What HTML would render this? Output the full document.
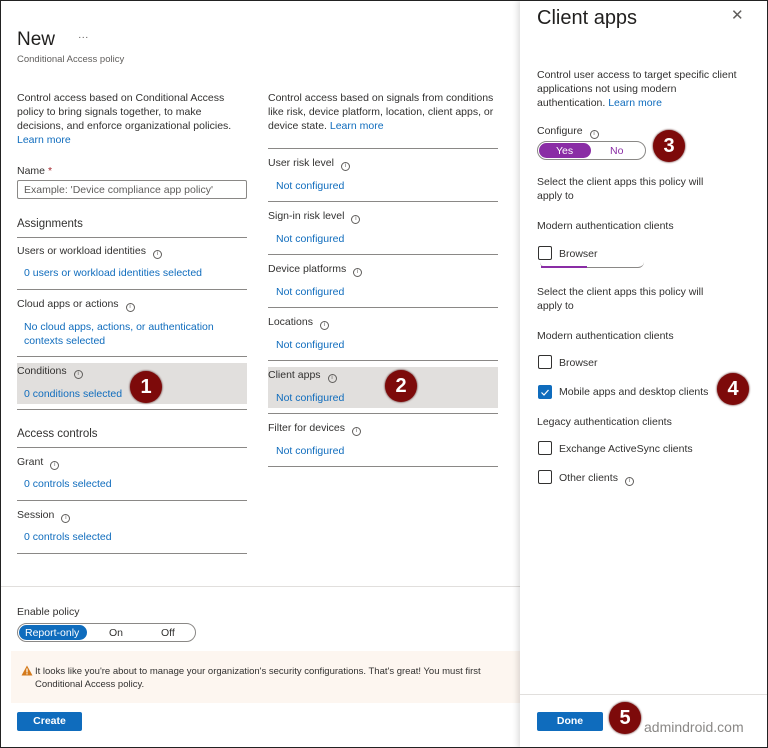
<!DOCTYPE html>
<html><head><meta charset="utf-8"><style>
*{margin:0;padding:0;box-sizing:border-box}
body{width:768px;height:748px;overflow:hidden;background:#fff;font-family:"Liberation Sans",sans-serif;font-size:10.5px;color:#323130;position:relative}
.t{position:absolute;line-height:14px;white-space:nowrap}
.l{color:#0f6cbd}
.hr{position:absolute;height:1px;background:#8a8886}
.i{display:inline-block;width:9px;height:9px;border:1px solid #605e5c;border-radius:50%;font-size:6px;line-height:7px;text-align:center;margin-left:7px;vertical-align:-1px;color:#605e5c}
.b{position:absolute;width:32px;height:32px;border-radius:50%;background:#7d0a0a;color:#fff;font-weight:bold;font-size:20px;line-height:32px;text-align:center;box-shadow:0 0 2px #400}
.cb{position:absolute;width:14px;height:14px;border:1px solid #323130;border-radius:2px;background:#fff}
.gray{position:absolute;background:#e1dfdd}
</style></head><body>
<div style="position:absolute;inset:0;border:1px solid #222;z-index:9;pointer-events:none"></div>

<div class="t" style="left:17px;top:29px;font-size:19px;line-height:22px;color:#201f1e">New</div>
<div class="t" style="left:78px;top:30px;color:#605e5c">···</div>
<div class="t" style="left:17px;top:53px;font-size:9.5px;color:#605e5c">Conditional Access policy</div>

<div class="t" style="left:17px;top:91px">Control access based on Conditional Access<br>policy to bring signals together, to make<br>decisions, and enforce organizational policies.<br><span class="l">Learn more</span></div>
<div class="t" style="left:17px;top:164px">Name <span style="color:#a4262c">*</span></div>
<div style="position:absolute;left:17px;top:180px;width:230px;height:19px;border:1px solid #8a8886;border-radius:2px"></div>
<div class="t" style="left:24px;top:183px;color:#605e5c">Example: 'Device compliance app policy'</div>
<div class="t" style="left:17px;top:217px;font-size:11.5px">Assignments</div>
<div class="hr" style="left:17px;top:237px;width:230px"></div>
<div class="t" style="left:17px;top:244px">Users or workload identities<span class="i">i</span></div>
<div class="t l" style="left:24px;top:266px">0 users or workload identities selected</div>
<div class="hr" style="left:17px;top:289px;width:230px"></div>
<div class="t" style="left:17px;top:297px">Cloud apps or actions<span class="i">i</span></div>
<div class="t l" style="left:24px;top:320px">No cloud apps, actions, or authentication<br>contexts selected</div>
<div class="hr" style="left:17px;top:356px;width:230px"></div>
<div class="gray" style="left:17px;top:363px;width:230px;height:41px"></div>
<div class="t" style="left:17px;top:364px">Conditions<span class="i">i</span></div>
<div class="t l" style="left:24px;top:387px">0 conditions selected</div>
<div class="b" style="left:130px;top:371px">1</div>
<div class="hr" style="left:17px;top:409px;width:230px"></div>
<div class="t" style="left:17px;top:427px;font-size:11.5px">Access controls</div>
<div class="hr" style="left:17px;top:447px;width:230px"></div>
<div class="t" style="left:17px;top:455px">Grant<span class="i">i</span></div>
<div class="t l" style="left:24px;top:477px">0 controls selected</div>
<div class="hr" style="left:17px;top:500px;width:230px"></div>
<div class="t" style="left:17px;top:508px">Session<span class="i">i</span></div>
<div class="t l" style="left:24px;top:530px">0 controls selected</div>
<div class="hr" style="left:17px;top:553px;width:230px"></div>

<div class="t" style="left:268px;top:91px">Control access based on signals from conditions<br>like risk, device platform, location, client apps, or<br>device state. <span class="l">Learn more</span></div>
<div class="hr" style="left:268px;top:148px;width:230px"></div>
<div class="t" style="left:268px;top:156px">User risk level<span class="i">i</span></div>
<div class="t l" style="left:276px;top:179px">Not configured</div>
<div class="hr" style="left:268px;top:201px;width:230px"></div>
<div class="t" style="left:268px;top:209px">Sign-in risk level<span class="i">i</span></div>
<div class="t l" style="left:276px;top:232px">Not configured</div>
<div class="hr" style="left:268px;top:254px;width:230px"></div>
<div class="t" style="left:268px;top:262px">Device platforms<span class="i">i</span></div>
<div class="t l" style="left:276px;top:285px">Not configured</div>
<div class="hr" style="left:268px;top:307px;width:230px"></div>
<div class="t" style="left:268px;top:315px">Locations<span class="i">i</span></div>
<div class="t l" style="left:276px;top:338px">Not configured</div>
<div class="hr" style="left:268px;top:360px;width:230px"></div>
<div class="gray" style="left:268px;top:367px;width:230px;height:41px"></div>
<div class="t" style="left:268px;top:368px">Client apps<span class="i">i</span></div>
<div class="t l" style="left:276px;top:391px">Not configured</div>
<div class="b" style="left:385px;top:370px">2</div>
<div class="hr" style="left:268px;top:413px;width:230px"></div>
<div class="t" style="left:268px;top:421px">Filter for devices<span class="i">i</span></div>
<div class="t l" style="left:276px;top:444px">Not configured</div>
<div class="hr" style="left:268px;top:466px;width:230px"></div>

<div style="position:absolute;left:0;top:586px;width:520px;height:1px;background:#e1dfdd"></div>
<div class="t" style="left:17px;top:605px">Enable policy</div>
<div style="position:absolute;left:17px;top:623px;width:179px;height:19px;border:1px solid #8a8886;border-radius:10px"></div>
<div style="position:absolute;left:19px;top:625px;width:68px;height:15px;background:#0f6cbd;border-radius:8px"></div>
<div class="t" style="left:25px;top:626px;color:#fff">Report-only</div>
<div class="t" style="left:109px;top:626px">On</div>
<div class="t" style="left:161px;top:626px">Off</div>
<div style="position:absolute;left:11px;top:651px;width:509px;height:52px;background:#fdf6f0"></div>
<svg style="position:absolute;left:21px;top:665px" width="12" height="11" viewBox="0 0 12 11"><path d="M6 0.5L11.5 10.5H0.5Z" fill="#d47a1c"/><rect x="5.4" y="3.5" width="1.2" height="4" fill="#fff"/><rect x="5.4" y="8.2" width="1.2" height="1.2" fill="#fff"/></svg>
<div class="t" style="left:35px;top:665px;font-size:9.5px;line-height:13px">It looks like you're about to manage your organization's security configurations. That's great! You must first<br>Conditional Access policy.</div>
<div style="position:absolute;left:17px;top:712px;width:65px;height:19px;background:#0f6cbd;border-radius:2px;color:#fff;font-weight:bold;text-align:center;line-height:19px">Create</div>

<div style="position:absolute;left:520px;top:0;width:248px;height:748px;background:#fff;box-shadow:-2px 0 6px rgba(0,0,0,.15)"></div>
<div class="t" style="left:537px;top:6px;font-size:20px;line-height:24px;color:#201f1e">Client apps</div>
<div class="t" style="left:731px;top:9px;font-size:15px;color:#605e5c">✕</div>
<div class="t" style="left:537px;top:68px">Control user access to target specific client<br>applications not using modern<br>authentication. <span class="l">Learn more</span></div>
<div class="t" style="left:537px;top:124px">Configure<span class="i">i</span></div>
<div style="position:absolute;left:537px;top:141px;width:109px;height:19px;border:1px solid #8a8886;border-radius:10px"></div>
<div style="position:absolute;left:539px;top:143px;width:52px;height:15px;background:#8a2da5;border-radius:8px"></div>
<div class="t" style="left:556px;top:144px;color:#fff">Yes</div>
<div class="t" style="left:610px;top:144px;color:#8a2da5">No</div>
<div class="b" style="left:653px;top:130px">3</div>
<div class="t" style="left:537px;top:175px">Select the client apps this policy will<br>apply to</div>
<div class="t" style="left:537px;top:219px">Modern authentication clients</div>
<div class="cb" style="left:538px;top:246px"></div>
<div class="t" style="left:559px;top:247px">Browser</div>
<div style="position:absolute;left:540px;top:262px;width:104px;height:6px;border-bottom:1px solid #8a8886;border-radius:0 0 8px 8px"></div>
<div style="position:absolute;left:541px;top:266px;width:46px;height:2px;background:#8a2da5"></div>
<div class="t" style="left:537px;top:285px">Select the client apps this policy will<br>apply to</div>
<div class="t" style="left:537px;top:329px">Modern authentication clients</div>
<div class="cb" style="left:538px;top:355px"></div>
<div class="t" style="left:559px;top:356px">Browser</div>
<div class="cb" style="left:538px;top:385px;background:#0f6cbd;border-color:#0f6cbd"></div>
<svg style="position:absolute;left:540px;top:388px" width="10" height="9"><path d="M1.5 4.5L4 7L8.5 2" stroke="#fff" stroke-width="1.2" fill="none"/></svg>
<div class="t" style="left:559px;top:385px">Mobile apps and desktop clients</div>
<div class="b" style="left:717px;top:373px">4</div>
<div class="t" style="left:537px;top:415px">Legacy authentication clients</div>
<div class="cb" style="left:538px;top:441px"></div>
<div class="t" style="left:559px;top:442px">Exchange ActiveSync clients</div>
<div class="cb" style="left:538px;top:470px"></div>
<div class="t" style="left:559px;top:471px">Other clients<span class="i">i</span></div>
<div style="position:absolute;left:520px;top:694px;width:248px;height:1px;background:#e1dfdd"></div>
<div style="position:absolute;left:537px;top:712px;width:66px;height:19px;background:#0f6cbd;border-radius:2px;color:#fff;font-weight:bold;text-align:center;line-height:19px">Done</div>
<div class="b" style="left:609px;top:702px">5</div>
<div class="t" style="left:644px;top:719px;font-size:14px;line-height:16px;color:#8a8886">admindroid.com</div>
</body></html>
